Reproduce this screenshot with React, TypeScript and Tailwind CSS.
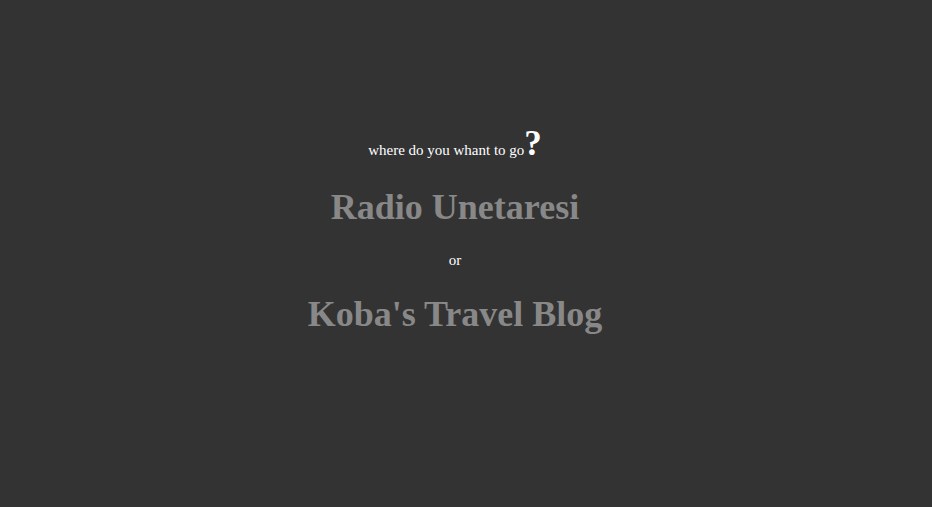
export default function App() {
  return (
    <div className="h-[507px] w-full bg-[#333333] font-['Liberation_Serif',serif]">
      <div className="flex w-[910px] flex-col items-center pt-[126px] text-center">
        <p className="text-[15px] leading-none text-white">
          where do you whant to go
          <span className="text-[35px] font-bold">?</span>
        </p>
        <a className="mt-[22px] text-[36px] font-bold leading-[48px] text-[#888888]">Radio Unetaresi</a>
        <p className="mt-[22px] text-[15px] leading-none text-white">or</p>
        <a className="mt-[22px] text-[36px] font-bold leading-[48px] text-[#888888]">Koba's Travel Blog</a>
      </div>
    </div>
  );
}
